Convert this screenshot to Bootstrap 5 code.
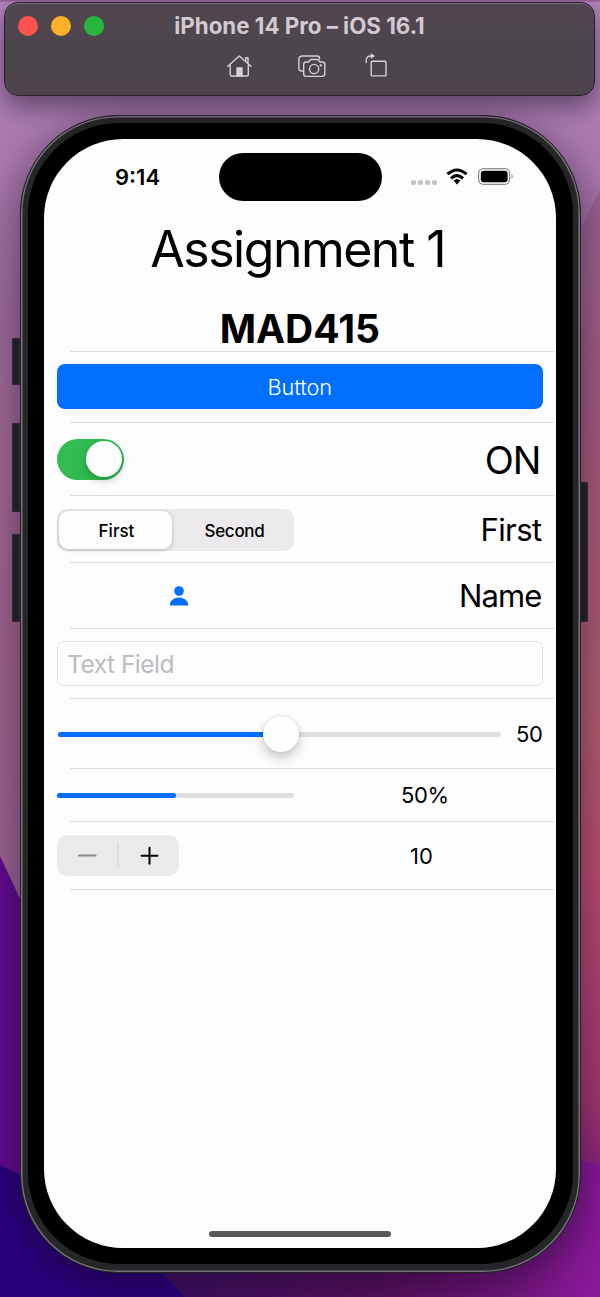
<!DOCTYPE html>
<html lang="en">
<head>
<meta charset="utf-8">
<meta name="viewport" content="width=device-width, initial-scale=1">
<title>iPhone 14 Pro – iOS 16.1</title>
<link href="https://cdn.jsdelivr.net/npm/bootstrap@5.3.0/dist/css/bootstrap.min.css" rel="stylesheet">
<style>
  body { font-family: Inter, "Liberation Sans", sans-serif; color: #000; width: 600px; height: 1297px; overflow: hidden; line-height: 1; }
  .wallpaper { z-index: -1; }
  .sim-bar { margin: 2px 5px 0 4px; height: 94px; border-radius: 14px; background: linear-gradient(#50464f, #4c454c 60%, #4d434c); border: 1px solid #2a1e2c; box-shadow: inset 0 1px 0 #7a6e79, 0 10px 26px rgba(30,20,40,.55); }
  .dots { left: 13px; top: 13px; gap: 13px; }
  .dots i { width: 20px; height: 20px; border-radius: 50%; }
  .sim-title { font-size: 22.3px; font-weight: 700; color: #d2cad1; padding-top: 12px; letter-spacing: 0; }
  .phone { margin: 18.5px 19px 0 20px; height: 1158px; border-radius: 98px; background: #262527; border: 1px solid #242024; box-shadow: inset 0 0 0 1.5px #77717a, 0 12px 40px 2px rgba(20,5,30,.5); padding: 7.5px 7.5px 7.5px 7px; }
  .bezel { height: 100%; border-radius: 91px; background: #000; padding: 15.5px 17px 16.5px 16px; }
  .screen { height: 100%; background: #fdfcff; border-radius: 79px; }
  .side-btn { background: #262527; border: 1px solid #3a343b; width: 8px; z-index: -1; }
  .island { width: 163px; height: 48px; border-radius: 24px; left: 174.5px; top: 14.5px; background: #000; }
  .status { height: 75px; padding: 2px 42px 0 71px; }
  .clock { font-size: 22px; font-weight: 600; letter-spacing: 0; }
  .h-title { font-size: 50px; height: 68px; letter-spacing: -1.5px; padding: 2px 4px 0 0; }
  .h-sub { font-size: 39px; font-weight: 700; height: 70px; }
  .line-row { position: relative; padding: 0 13px 0 13px; border: 0; }
  .line-row.h-sub { padding-top: 27px; }
  .line-row::after { content: ""; position: absolute; right: 1px; bottom: 0; left: 26px; height: 1px; background: #dddce0; }
  .cta { height: 45px; border-radius: 8px; background: #006eff; color: #fff; font-size: 21.7px; font-weight: 300; line-height: 44px; margin-bottom: 2px; }
  .toggle { width: 67px; height: 41px; border-radius: 21px; background: #30bc50; padding: 2px; }
  .toggle span { width: 36px; height: 36px; border-radius: 50%; background: #fdfcff; box-shadow: 0 3px 8px rgba(0,0,0,.25); }
  .segment { width: 237px; height: 42px; border-radius: 10px; background: #ebe9ec; padding: 2px; font-size: 17px; font-weight: 500; margin-top: 1px; }
  .segment .on { background: #fdfcff; border-radius: 9px; box-shadow: 0 1px 3px 1px rgba(0,0,0,.16); padding: 3px 0 0 2px; }
  .segment .off { padding: 3px 0 0 5px; letter-spacing: -.3px; }
  .field { height: 45px; border: 1px solid #e1e0e3; border-radius: 7px; background: #fdfcff; color: #bcbbbe; font-size: 24.5px; letter-spacing: -.5px; padding: 1px 9px 0; }
  .value-lg { font-size: 38px; letter-spacing: -1px; margin: 1px 2px 0 0; }
  .value-md { font-size: 31px; letter-spacing: -.6px; margin-right: 1px; }
  .track { height: 5px; border-radius: 3px; background: #dfdee1; }
  .fill { height: 5px; border-radius: 3px; background: #006eff; }
  .knob { width: 36px; height: 36px; border-radius: 50%; background: #fdfcff; box-shadow: 0 0 2px rgba(0,0,0,.16), 0 6px 12px rgba(0,0,0,.22); left: 204.5px; top: -16px; }
  .stepper { width: 122px; height: 41px; border-radius: 10px; background: #ebe9ec; }
  .t22 { font-size: 22px; letter-spacing: -.4px; padding-top: 0; }
  .home { width: 182px; height: 6px; border-radius: 3px; background: #59585a; left: 165px; bottom: 11px; }
</style>
</head>
<body class="position-relative m-0">
<svg class="wallpaper position-absolute top-0 start-0" width="600" height="1297">
  <defs>
    <linearGradient id="a" x1="0" y1="0" x2="0" y2="1"><stop offset="0" stop-color="#b385bd"/><stop offset=".25" stop-color="#a06d9d"/><stop offset=".5" stop-color="#a2648e"/><stop offset=".7" stop-color="#9c6794"/></linearGradient>
    <linearGradient id="b" x1="0" y1="0" x2="0" y2="1"><stop offset="0" stop-color="#9d6493"/><stop offset=".3" stop-color="#a95c7a"/><stop offset=".55" stop-color="#b35f70"/><stop offset=".7" stop-color="#bc4f72"/><stop offset=".93" stop-color="#a33a70"/><stop offset="1" stop-color="#8d2580"/></linearGradient>
    <linearGradient id="c" x1="0" y1="0" x2="1" y2="0"><stop offset="0" stop-color="#370f66"/><stop offset=".55" stop-color="#591060"/><stop offset="1" stop-color="#8b1a9b"/></linearGradient>
  </defs>
  <rect width="600" height="1297" fill="url(#a)"/>
  <path d="M600 190 L560 270 V1170 H600Z" fill="url(#b)"/>
  <path d="M0 856 L110 1090 V1297 H0Z" fill="#620c91"/>
  <path d="M110 1155 H560 L600 1164 V1297 H110Z" fill="url(#c)"/>
  <path d="M0 1165 Q110 1215 185 1297 H0Z" fill="#2a007f"/>
  <path d="M0 .7 H600" stroke="#99609b" stroke-width="2"/>
</svg>

<header class="sim-bar position-relative d-flex flex-column align-items-center">
  <div class="dots position-absolute d-flex">
    <i style="background:#ff524f"></i><i style="background:#fdb12b"></i><i style="background:#27b63c"></i>
  </div>
  <div class="sim-title">iPhone 14 Pro – iOS 16.1</div>
  <svg class="position-absolute" style="left:222px;top:49px" width="170" height="30" fill="none" stroke="#d8d0d7" stroke-width="1.4" stroke-linecap="round" stroke-linejoin="round">
    <path d="M.8 14.2 L12.3 4 L24 14.2 M3.2 13 V22.5 Q3.2 24 4.7 24 H19.8 Q21.3 24 21.3 22.5 V13 M18.7 9.2 V5.8 H21 V11"/>
    <path d="M10 24 V16 H15 V24Z" fill="#d8d0d7"/>
    <path d="M76.5 19 H74.5 Q71.9 19 71.9 16.6 V7.4 Q71.9 4 75.3 4 H90 Q92.6 4 92.6 6.5 V7"/>
    <path d="M79 24.4 H95 Q97.8 24.4 97.8 21.8 V12.5 Q97.8 10 95.3 10 H93 L91.3 8 Q90.8 7.5 90 7.5 H84.5 Q83.7 7.5 83.1 8 L81.5 10 H79.2 Q76.7 10 76.7 12.5 V21.8 Q76.7 24.4 79 24.4Z"/>
    <circle cx="87.1" cy="17" r="4.6"/><circle cx="93.8" cy="13.4" r=".5"/>
    <rect x="144.2" y="9.3" width="14.8" height="14.6" rx="1.2"/>
    <path d="M139.2 10.5 V8.5 Q139.2 4 143.7 4 H146.7"/><path d="M144.3 1.7 L147.5 4 L144.3 6.3Z" fill="#d8d0d7" stroke-width=".6"/>
  </svg>
</header>

<div class="side-btn position-absolute" style="left:12px;top:338px;height:47px"></div>
<div class="side-btn position-absolute" style="left:12px;top:423px;height:89px"></div>
<div class="side-btn position-absolute" style="left:12px;top:534px;height:88px"></div>
<div class="side-btn position-absolute" style="left:580px;top:482px;height:140px"></div>

<main class="phone">
  <div class="bezel">
    <div class="screen position-relative">
      <div class="island position-absolute"></div>
      <div class="home position-absolute"></div>
      <div class="status d-flex align-items-center justify-content-between">
        <div class="clock">9:14</div>
        <svg width="104" height="22" viewBox="0 -1 104 22">
          <g fill="#c5c4c7"><rect x="1" y="13" width="5" height="5" rx="2"/><rect x="8" y="13" width="5" height="5" rx="2"/><rect x="15" y="13" width="5" height="5" rx="2"/><rect x="22" y="13" width="5" height="5" rx="2"/></g>
          <g fill="none" stroke="#000" stroke-width="3"><path d="M37.4 7.2 Q47 -1.3 56.6 7.2"/><path d="M41 11.4 Q47 5.8 53 11.4"/></g>
          <path d="M43.6 13.6 Q47 10.6 50.4 13.6 L47 17.5Z"/>
          <rect x="68.6" y="1.7" width="31" height="15.6" rx="4.8" fill="none" stroke="#8d8c8f" stroke-width="1.2"/>
          <rect x="70.8" y="3.8" width="26.8" height="11.5" rx="3"/>
          <path d="M101.5 7 Q104 9.5 101.5 12Z" fill="#8d8c8f"/>
        </svg>
      </div>
      <div class="h-title d-flex align-items-center justify-content-center">Assignment 1</div>
      <div class="list-group list-group-flush rounded-0">
        <div class="line-row h-sub text-center">MAD415</div>
        <div class="line-row d-flex align-items-center" style="height:71px"><button class="btn cta w-100 p-0">Button</button></div>
        <div class="line-row d-flex align-items-center justify-content-between" style="height:73px">
          <div class="toggle d-flex justify-content-end align-items-center"><span></span></div>
          <div class="value-lg">ON</div>
        </div>
        <div class="line-row d-flex align-items-center justify-content-between" style="height:67px">
          <div class="segment d-flex text-center">
            <div class="on d-flex align-items-center justify-content-center" style="width:113px">First</div>
            <div class="off flex-fill d-flex align-items-center justify-content-center">Second</div>
          </div>
          <div class="value-md">First</div>
        </div>
        <div class="line-row d-flex align-items-center justify-content-between" style="height:66px">
          <svg width="237" height="24" fill="#006eff"><circle cx="122" cy="7" r="4.8"/><path d="M112.8 21.5 C112.8 16.5 117.5 13.6 122 13.6 S131.3 16.5 131.3 21.5Z"/></svg>
          <div class="value-md" style="letter-spacing:-.9px">Name</div>
        </div>
        <div class="line-row d-flex align-items-center" style="height:70px"><div class="field w-100 d-flex align-items-center">Text Field</div></div>
        <div class="line-row d-flex align-items-center justify-content-between" style="height:70px">
          <div class="track position-relative" style="width:443px;margin:1px 0 0 1px">
            <div class="fill" style="width:50%"></div><div class="knob position-absolute"></div>
          </div>
          <div class="t22">50</div>
        </div>
        <div class="line-row d-flex align-items-center" style="height:53px">
          <div class="track flex-shrink-0" style="width:237px"><div class="fill" style="width:50%"></div></div>
          <div class="t22" style="margin-left:107px">50%</div>
        </div>
        <div class="line-row d-flex align-items-center" style="height:68px">
          <div class="stepper"><svg width="122" height="41" stroke-linecap="round"><path d="M22 20.5 H38.5" stroke="#858487" stroke-width="2"/><path d="M61 9 V32" stroke="#cfced1"/><path d="M84.5 20.7 H100.5 M92.5 12.7 V28.7" stroke="#000" stroke-width="2"/></svg></div>
          <div class="t22" style="margin-left:231px;letter-spacing:0">10</div>
        </div>
      </div>
    </div>
  </div>
</main>
<script src="https://cdn.jsdelivr.net/npm/bootstrap@5.3.0/dist/js/bootstrap.bundle.min.js"></script>
</body>
</html>
